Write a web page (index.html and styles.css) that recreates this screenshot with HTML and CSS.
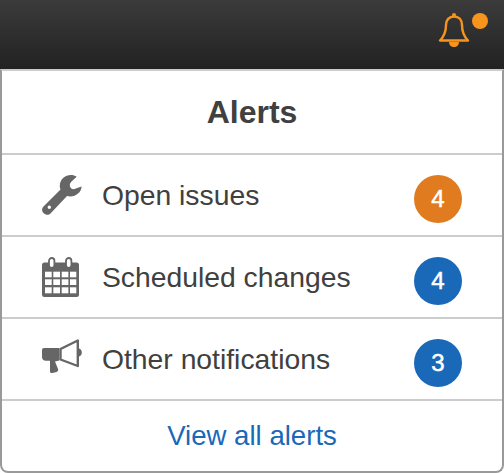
FILE: index.html
```html
<!DOCTYPE html>
<html lang="en">
<head>
<meta charset="utf-8">
<title>Alerts</title>
<link rel="stylesheet" href="styles.css">
</head>
<body>
<header class="topbar">
  <div class="bell-wrap">
    <svg class="bell" viewBox="0 0 32 34" aria-hidden="true">
      <path d="M16 3.500c-5 0-8 3.500-8 8.500 0 6-1.500 11-6 15.500h28c-4.500-4.500-6-9.500-6-15.500 0-5-3-8.500-8-8.500z" fill="none" stroke="#f7941d" stroke-width="2.400" stroke-linejoin="round"/>
      <circle cx="16" cy="2" r="2" fill="#f7941d"/>
      <path d="M11 29h10c0 3-2.200 5-5 5s-5-2-5-5z" fill="#f7941d"/>
    </svg>
    <span class="dot"></span>
  </div>
</header>
<section class="panel">
  <h2 class="title">Alerts</h2>
  <div class="row">
    <svg class="icon" viewBox="0 0 40 40" aria-hidden="true"><path fill-rule="evenodd" d="M34.700 1.700 29.500 6.500C28 8 27.500 10 28 11.500c.5 2 2.500 3 4.500 2.500l7-2.500c.2 5.500-5.500 10-11 10-1.500 0-2.500-.2-3.500-.5L8.500 38.500c-2 2-5 1.500-7-.5s-1.800-4.500 0-6.500l17-17c-.5-1.500-.7-2.500-.7-3.700C17.800 4.500 23 0 29 0c2 0 4 .5 5.700 1.700zM7.300 30.600a1.700 1.700 0 1 0 0 3.400 1.700 1.700 0 0 0 0-3.400z"/></svg>
    <span class="label">Open issues</span>
    <span class="badge badge-orange">4</span>
  </div>
  <div class="row">
    <svg class="icon" viewBox="0 0 40 40" aria-hidden="true">
      <rect x="0" y="5.500" width="37" height="34.500" rx="2.500"/>
      <rect class="ring" x="7" y="1" width="5.400" height="10" rx="2.700"/>
      <rect class="ring" x="24" y="1" width="5.400" height="10" rx="2.700"/>
      <g class="cells">
        <rect x="3" y="14.700" width="6.700" height="5.600"/>
        <rect x="11.300" y="14.700" width="6.700" height="5.600"/>
        <rect x="19.700" y="14.700" width="6.700" height="5.600"/>
        <rect x="28" y="14.700" width="6.300" height="5.600"/>
        <rect x="3" y="22.300" width="6.700" height="5.700"/>
        <rect x="11.300" y="22.300" width="6.700" height="5.700"/>
        <rect x="19.700" y="22.300" width="6.700" height="5.700"/>
        <rect x="28" y="22.300" width="6.300" height="5.700"/>
        <rect x="3" y="30.300" width="6.700" height="6"/>
        <rect x="11.300" y="30.300" width="6.700" height="6"/>
        <rect x="19.700" y="30.300" width="6.700" height="6"/>
        <rect x="28" y="30.300" width="6.300" height="6"/>
      </g>
    </svg>
    <span class="label">Scheduled changes</span>
    <span class="badge badge-blue">4</span>
  </div>
  <div class="row">
    <svg class="icon" viewBox="0 0 40 40" aria-hidden="true">
      <path d="M2 9h15.300v12.500l-4.300 1 3 7.500c.5 1.500-.3 2.500-1.500 3l-4 1c-1.500.3-2.500-.3-2.500-1.800V21.800H4C1.500 21.800 0 20 0 18v-7c0-1.200.8-2 2-2z"/>
      <path d="M18.500 10 35.800 1.500v25.500L18.500 20.500z" class="horn"/>
      <path d="M37 9.500c1.800.5 2.800 2 2.800 4s-1 3.500-2.800 4z"/>
    </svg>
    <span class="label">Other notifications</span>
    <span class="badge badge-blue">3</span>
  </div>
  <a class="footer" href="#">View all alerts</a>
</section>
</body>
</html>
```
FILE: styles.css
```css
* {
  box-sizing: border-box;
}
html, body {
  margin: 0;
  height: 100%;
}
body {
  width: 504px;
  height: 473px;
  overflow: hidden;
  display: flex;
  flex-direction: column;
  background: #fff;
  font-family: "Liberation Sans", Arial, sans-serif;
  color: #404040;
}
.topbar {
  height: 69px;
  flex: none;
  background: linear-gradient(#3b3b3b, #222);
  display: flex;
  justify-content: flex-end;
  padding: 13px 16px 0 0;
}
.bell-wrap {
  display: flex;
  align-items: flex-start;
  gap: 2px;
}
.bell {
  width: 32px;
  height: 34px;
}
.dot {
  width: 16px;
  height: 16px;
  border-radius: 50%;
  background: #f7941d;
}
.panel {
  flex: 1;
  display: flex;
  flex-direction: column;
  background: #fff;
  border: 2px solid #999;
  border-top: 2px solid #ccc;
  border-radius: 0 0 8px 8px;
}
.title {
  margin: 0;
  height: 84px;
  display: flex;
  align-items: center;
  justify-content: center;
  font-size: 32px;
  font-weight: 700;
  border-bottom: 2px solid #ccc;
}
.row {
  height: 82px;
  display: flex;
  align-items: center;
  padding: 0 40px;
  border-bottom: 2px solid #ccc;
}
.icon {
  width: 40px;
  height: 40px;
  flex: none;
  fill: #666;
}
.ring {
  fill: #fff;
  stroke: #666;
  stroke-width: 1.800;
}
.cells {
  fill: #fff;
}
.horn {
  fill: #fff;
  stroke: #666;
  stroke-width: 2.400;
  stroke-linejoin: round;
}
.label {
  flex: 1;
  margin-left: 20px;
  font-size: 28.300px;
}
.badge {
  width: 48px;
  height: 48px;
  margin-top: 8px;
  border-radius: 50%;
  display: flex;
  align-items: center;
  justify-content: center;
  color: #fff;
  font-size: 24px;
  -webkit-text-stroke: 0.500px #fff;
}
.badge-orange {
  background: #e07b20;
}
.badge-blue {
  background: #1a68b8;
}
.footer {
  flex: 1;
  display: flex;
  align-items: center;
  justify-content: center;
  font-size: 27.600px;
  color: #1a68b8;
  text-decoration: none;
}
```
